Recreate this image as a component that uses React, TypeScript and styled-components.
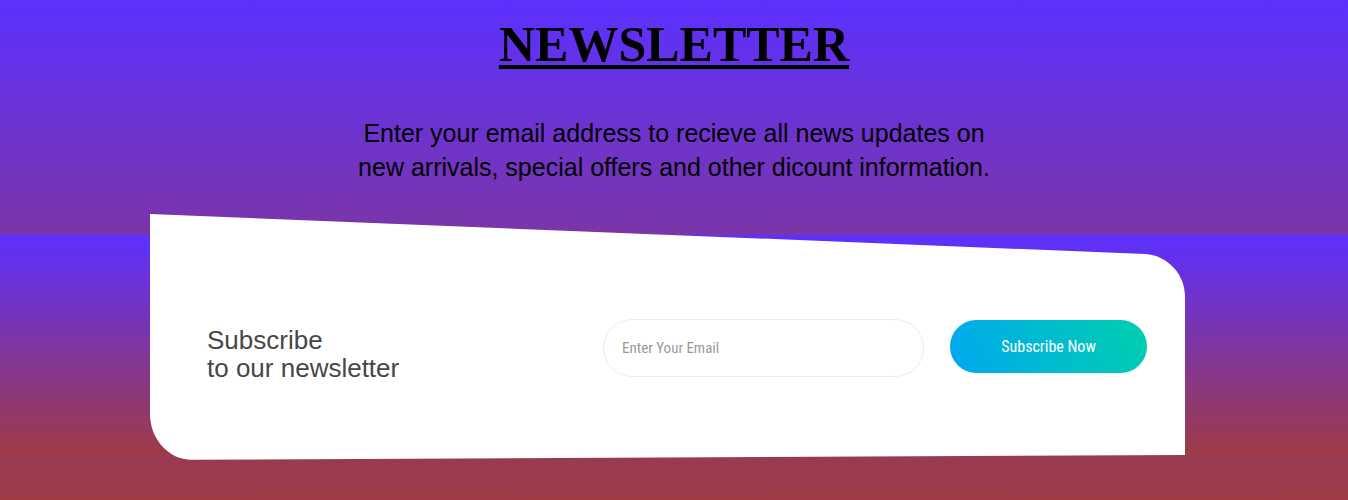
import React from "react";
import styled, { createGlobalStyle } from "styled-components";

const GlobalStyle = createGlobalStyle`
  html, body {
    margin: 0;
    padding: 0;
  }
  body {
    min-height: 100vh;
    font-family: "Liberation Sans", Arial, sans-serif;
    background: linear-gradient(180deg, #5c30ff 0%, #9e3b45 100%) fixed;
  }
`;

const Header = styled.header`
  height: 235px;
  box-sizing: border-box;
  padding-top: 16px;
  text-align: center;
  display: flex;
  flex-direction: column;
  align-items: center;
`;

const Title = styled.h1`
  margin: 0;
  font-family: "Liberation Serif", "Times New Roman", serif;
  font-weight: 700;
  font-size: 50px;
  line-height: 57px;
  color: #000;
  text-decoration: underline;
  text-decoration-thickness: 4px;
  text-underline-offset: 4px;
`;

const Lead = styled.p`
  margin: 43px 0 0;
  max-width: 650px;
  font-family: "Liberation Sans", Arial, sans-serif;
  font-size: 25px;
  line-height: 34px;
  color: #000;
`;

const Band = styled.section`
  height: 220px;
  box-sizing: border-box;
  display: flex;
  flex-direction: column;
  padding: 0 163px 0 150px;
  background: linear-gradient(180deg, #5c30ff 0%, #9e3b45 100%);
`;

const Card = styled.div`
  position: relative;
  isolation: isolate;
  flex: none;
  margin-top: -21px;
  height: 246px;
  box-sizing: border-box;
  padding: 22px 38px 0 57px;
  display: flex;
  align-items: center;

  &::before {
    content: "";
    position: absolute;
    inset: 0;
    z-index: -1;
    background: #fff;
    clip-path: path("M0 0 L995 40 C1017 41 1035 60 1035 82 L1035 241 L42 245.8 C19 246 0 225 0 200 Z");
  }
`;

const Label = styled.div`
  margin-top: 12px;
  font-family: "Liberation Sans", Arial, sans-serif;
  font-size: 26px;
  line-height: 28px;
  color: #474747;
`;

const Form = styled.form`
  margin-left: auto;
  display: flex;
  align-items: center;
  gap: 26px;
`;

const EmailInput = styled.input`
  box-sizing: border-box;
  width: 321px;
  height: 58px;
  padding: 0 18px;
  border: 1px solid #ececec;
  border-radius: 29px;
  background: #fff;
  outline: none;
  font-family: "Liberation Sans Narrow", "Arial Narrow", "Roboto Condensed", "Liberation Sans", sans-serif;
  font-size: 15px;
  color: #555;

  &::placeholder {
    color: #9a9a9a;
  }
`;

const SubmitButton = styled.button`
  box-sizing: border-box;
  width: 197px;
  height: 53px;
  margin-bottom: 3px;
  border: none;
  border-radius: 27px;
  background: linear-gradient(70deg, #00a8f0 0%, #00cfae 100%);
  color: #fff;
  font-family: "Liberation Sans Narrow", "Arial Narrow", "Roboto Condensed", "Liberation Sans", sans-serif;
  font-size: 16px;
  cursor: pointer;
`;

export default function App() {
  return (
    <>
      <GlobalStyle />
      <Header>
        <Title>NEWSLETTER</Title>
        <Lead>
          Enter your email address to recieve all news updates on new arrivals,
          special offers and other dicount information.
        </Lead>
      </Header>
      <Band>
        <Card>
          <Label>
            Subscribe
            <br />
            to our newsletter
          </Label>
          <Form onSubmit={(e) => e.preventDefault()}>
            <EmailInput type="email" placeholder="Enter Your Email" />
            <SubmitButton type="submit">Subscribe Now</SubmitButton>
          </Form>
        </Card>
      </Band>
    </>
  );
}
